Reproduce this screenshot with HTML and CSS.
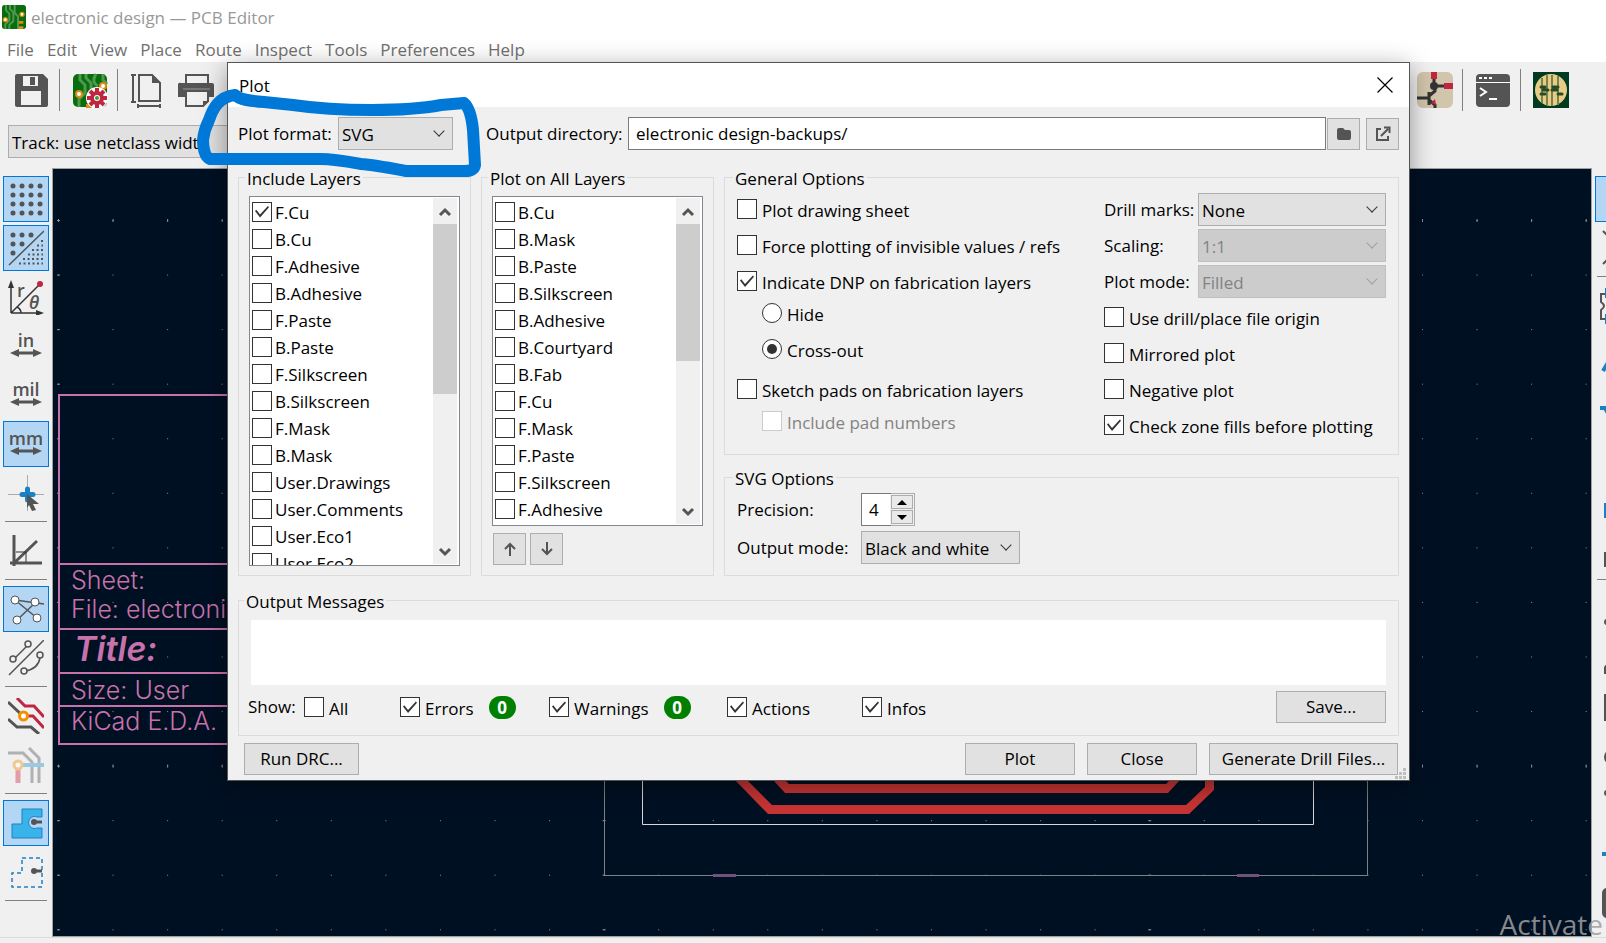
FILE: index.html
```html
<!DOCTYPE html>
<html lang="en">
  <head>
    <meta charset="utf-8">
    <title>electronic design — PCB Editor</title>
    <link rel="stylesheet" href="styles.css">
  </head>
  <body>
    <header class="titlebar">
      <svg class="app-icon" width="24" height="24" viewBox="0 0 36 36">
        <rect width="36" height="36" rx="4" fill="#0b6b0f"/>
        <path d="M6 0v8l5 5v10l-6 6v7M12 0v6l5 5v13l-6 6v6M19 0v12l5 5v19" fill="none" stroke="#4c9a4c" stroke-width="3"/>
        <circle cx="30" cy="14" r="3" fill="#fff" stroke="#e08a10" stroke-width="2"/>
        <circle cx="5" cy="22" r="3" fill="#fff" stroke="#e08a10" stroke-width="2"/>
        <path d="M25 24h7v4h-7zM25 32h7v4h-7z" fill="#e08a10"/>
      </svg>
      <span>electronic design — PCB Editor</span>
    </header>
    <nav class="menubar">
      <a href="#">File</a>
      <a href="#">Edit</a>
      <a href="#">View</a>
      <a href="#">Place</a>
      <a href="#">Route</a>
      <a href="#">Inspect</a>
      <a href="#">Tools</a>
      <a href="#">Preferences</a>
      <a href="#">Help</a>
    </nav>

    <div class="toolbar">
      <button class="tool" aria-label="Save">
        <svg width="36" height="36" viewBox="0 0 36 36">
          <path d="M3 2h26l5 5v26a2 2 0 0 1-2 2H3a2 2 0 0 1-2-2V4a2 2 0 0 1 2-2z" fill="#545454"/>
          <path d="M9 4h15v10H9zM7 19h20v14H7z" fill="#f0f0f0"/>
          <path d="M16 5h5v8h-5z" fill="#545454"/>
        </svg>
      </button>
      <span class="divider"></span>
      <button class="tool" aria-label="Board setup">
        <svg width="36" height="36" viewBox="0 0 36 36">
          <rect x="1" y="2" width="34" height="33" rx="5" fill="#0b6b0f"/>
          <path d="M8 2v6l5 5v8l-6 6v8M14 2v4l5 5v9M24 2c-4 6-2 10 2 12M31 2v6l4 4" fill="none" stroke="#4c9a4c" stroke-width="3"/>
          <circle cx="7" cy="22" r="3" fill="#fff" stroke="#e08a10" stroke-width="2"/>
          <circle cx="31" cy="14" r="3" fill="#fff" stroke="#e08a10" stroke-width="2"/>
          <path d="M14 34h8" stroke="#e08a10" stroke-width="4"/>
          <circle cx="25" cy="26" r="11" fill="#fff"/>
          <path d="M25 16v20M15 26h20M18 19l14 14M32 19L18 33" stroke="#bf2641" stroke-width="4"/>
          <circle cx="25" cy="26" r="5" fill="#fff" stroke="#bf2641" stroke-width="4"/>
          <circle cx="25" cy="26" r="2" fill="#3c9a3c"/>
        </svg>
      </button>
      <span class="divider"></span>
      <button class="tool" aria-label="Page settings">
        <svg width="36" height="36" viewBox="0 0 36 36">
          <path d="M9 3h13l8 8v18H9z" fill="none" stroke="#545454" stroke-width="2"/>
          <path d="M22 2v9h9z" fill="#545454"/>
          <path d="M3 2v28M1 3h5M1 30h5M8 34h22M8 32v4M30 32v4" fill="none" stroke="#545454" stroke-width="2"/>
        </svg>
      </button>
      <button class="tool print" aria-label="Print">
        <svg width="36" height="36" viewBox="0 0 36 36">
          <path d="M8 12V3h22v9" fill="#f0f0f0" stroke="#545454" stroke-width="2"/>
          <path d="M3 11h31a2 2 0 0 1 2 2v12h-6v-7H8v7H0V13a2 2 0 0 1 3-2z" fill="#545454"/>
          <path d="M5 17h27" stroke="#999"/>
          <path d="M8 19h22v10l-5 5H8z" fill="#f0f0f0" stroke="#545454" stroke-width="2"/>
          <path d="M25 35v-6h6z" fill="#545454"/>
        </svg>
      </button>
      <div class="toolbar-end">
        <button class="tool" aria-label="Schematic editor">
          <svg width="36" height="36" viewBox="0 0 36 36">
            <rect width="36" height="36" rx="6" fill="#d1c5ac"/>
            <path d="M0 26h12M12 20v13M12 24l6-5v-6M18 14h12M17 7v7M12 28l6 5v3" fill="none" stroke="#333" stroke-width="3"/>
            <circle cx="17" cy="14" r="4" fill="#333"/>
            <path d="M14 0h6v7h-6zM27 11h9v6h-9zM14 31l4-4 1 6z" fill="#bf2641"/>
          </svg>
        </button>
        <span class="divider"></span>
        <button class="tool" aria-label="Scripting console">
          <svg width="36" height="36" viewBox="0 0 36 36">
            <rect x="1" y="2" width="34" height="33" rx="4" fill="#545454"/>
            <path d="M1 10.500h34" stroke="#fff"/>
            <path d="M4 6h3M9 6h3M14 6h3" stroke="#fff" stroke-width="2"/>
            <path d="M5 16l6 4-6 4M14 27h8" fill="none" stroke="#fff" stroke-width="2"/>
          </svg>
        </button>
        <span class="divider"></span>
        <button class="tool" aria-label="Board plugin">
          <svg width="36" height="36" viewBox="0 0 36 36">
            <rect width="36" height="36" fill="#003a20"/>
            <circle cx="18" cy="18" r="16" fill="#e6cc86"/>
            <path d="M9 6v25M14 3v30M19 3v31M25 4v29" stroke="#77824c" stroke-width="2"/>
            <path d="M8 15h4M20 15h9M8 22h4M25 22h4M10 18h18" stroke="#274a28" stroke-width="3" stroke-linecap="round" stroke-dasharray="5 4"/>
          </svg>
        </button>
      </div>
    </div>
    <div class="toolbar-track">
      <select class="track-select" aria-label="Track width">
        <option>Track: use netclass width</option>
      </select>
    </div>

    <main class="workspace">
      <aside class="side-tools">
        <button class="side-button on" aria-label="Show grid">
          <svg width="36" height="36" viewBox="0 0 36 36">
            <path d="M5 5h28M5 14h28M5 23h28M5 32h28" fill="none" stroke="#545454" stroke-width="5" stroke-linecap="round" stroke-dasharray="0.010 9"/>
          </svg>
        </button>
        <button class="side-button on" aria-label="Grid overrides">
          <svg width="36" height="36" viewBox="0 0 36 36">
            <path d="M5 5h20M5 14h10M5 23h1" fill="none" stroke="#545454" stroke-width="5" stroke-linecap="round" stroke-dasharray="0.010 9"/>
            <path d="M1 35L36 1" stroke="#545454" stroke-width="1.500"/>
            <path d="M33 11h2M29 15.500h6M24 20h11M20 24.500h15M15 29h20M11 33.500h24" stroke="#545454" stroke-width="2" stroke-dasharray="2 2.500"/>
          </svg>
        </button>
        <button class="side-button" aria-label="Polar coordinates">
          <svg width="36" height="36" viewBox="0 0 36 36">
            <path d="M3 34V6M3 34h28M3 34L32 5M9 28q4 2 4 6" fill="none" stroke="#333" stroke-width="1.500"/>
            <path d="M3 1l3 8H0zM36 34l-8-3v6z" fill="#333"/>
            <circle cx="32" cy="5" r="3" fill="#bf2641"/>
            <text class="icon-text" x="9" y="18">r</text>
            <text class="icon-text slant" x="21" y="30">θ</text>
          </svg>
        </button>
        <button class="side-button" aria-label="Inches">
          <svg width="36" height="36" viewBox="0 0 36 36">
            <text class="icon-text" x="18" y="19" text-anchor="middle">in</text>
            <path d="M8 25h20" stroke="#545454" stroke-width="3"/>
            <path d="M2 25l9-4v8zM34 25l-9-4v8z" fill="#545454"/>
          </svg>
        </button>
        <button class="side-button" aria-label="Mils">
          <svg width="36" height="36" viewBox="0 0 36 36">
            <text class="icon-text" x="18" y="19" text-anchor="middle">mil</text>
            <path d="M8 25h20" stroke="#545454" stroke-width="3"/>
            <path d="M2 25l9-4v8zM34 25l-9-4v8z" fill="#545454"/>
          </svg>
        </button>
        <button class="side-button on" aria-label="Millimeters">
          <svg width="36" height="36" viewBox="0 0 36 36">
            <text class="icon-text" x="18" y="19" text-anchor="middle">mm</text>
            <path d="M8 25h20" stroke="#545454" stroke-width="3"/>
            <path d="M2 25l9-4v8zM34 25l-9-4v8z" fill="#545454"/>
          </svg>
        </button>
        <button class="side-button" aria-label="Full cursor">
          <svg width="36" height="36" viewBox="0 0 36 36">
            <path d="M0 19.500h36M19.500 0v36" stroke="#aaa"/>
            <path d="M14 19.500h11M19.500 14v11" stroke="#1a81c4" stroke-width="5" stroke-linecap="round"/>
            <path d="M19 19l12 10h-6l3 6-4 1-3-6-2 3z" fill="#545454"/>
          </svg>
        </button>
        <hr class="side-line">
        <button class="side-button" aria-label="Angle snap">
          <svg width="36" height="36" viewBox="0 0 36 36">
            <path d="M6 2v31M2 30h32M5 31L29 8" fill="none" stroke="#545454" stroke-width="3"/>
            <path d="M8 19h10v10" fill="none" stroke="#333"/>
          </svg>
        </button>
        <hr class="side-line">
        <button class="side-button on" aria-label="Ratsnest">
          <svg width="36" height="36" viewBox="0 0 36 36">
            <path d="M7 9l22 18M9 29L27 12M7 9l29 4" stroke="#545454" stroke-width="1.500"/>
            <g fill="#fff" stroke="#545454"><circle cx="7" cy="9" r="4"/><circle cx="27" cy="11" r="4"/><circle cx="9" cy="29" r="4"/><circle cx="29" cy="27" r="4"/></g>
          </svg>
        </button>
        <button class="side-button" aria-label="Curved ratsnest">
          <svg width="36" height="36" viewBox="0 0 36 36">
            <path d="M1 35L36 0M6 19L20 5M17 31q13-2 15-13" fill="none" stroke="#545454" stroke-width="1.500"/>
            <g fill="#f0f0f0" stroke="#545454" stroke-width="1.500"><circle cx="20" cy="4" r="3"/><circle cx="5" cy="19" r="3"/><circle cx="32" cy="15" r="3"/><circle cx="16" cy="31" r="3"/></g>
          </svg>
        </button>
        <hr class="side-line">
        <button class="side-button" aria-label="Net highlighting">
          <svg width="36" height="36" viewBox="0 0 36 36">
            <path d="M0 4l15 14M0 21l9 8h14l8 7" fill="none" stroke="#545454" stroke-width="3"/>
            <path d="M9 0l8 8h9l10 11M16 18h9l11 12" fill="none" stroke="#bf2641" stroke-width="3"/>
            <circle cx="15.500" cy="18" r="4" fill="#fff" stroke="#f29100" stroke-width="3"/>
          </svg>
        </button>
        <button class="side-button faded" aria-label="Layer dimming">
          <svg width="36" height="36" viewBox="0 0 36 36">
            <path d="M0 6h15l9 9v21M21 1l10 10v25" fill="none" stroke="#545454" stroke-width="3"/>
            <path d="M10 20v16" stroke="#d02040" stroke-width="5"/>
            <path d="M12 18h24" stroke="#1a90d0" stroke-width="4"/>
            <circle cx="10" cy="18" r="4" fill="#fff" stroke="#f29100" stroke-width="3"/>
          </svg>
        </button>
        <hr class="side-line">
        <button class="side-button on" aria-label="Filled zones">
          <svg width="36" height="36" viewBox="0 0 36 36">
            <path d="M4 19h10V4h20v8h-5a6 6 0 1 0 0 11h5v10H4z" fill="#39b4ea" stroke="#1a81c4"/>
            <path d="M26 17h8" stroke="#545454" stroke-width="3"/>
            <circle cx="26" cy="17" r="3" fill="#545454"/>
          </svg>
        </button>
        <button class="side-button" aria-label="Zone outlines">
          <svg width="36" height="36" viewBox="0 0 36 36">
            <path d="M14 4h20v29H4V19h10z" fill="none" stroke="#1a81c4" stroke-width="1.500" stroke-dasharray="4 3"/>
            <path d="M26 17h8" stroke="#545454" stroke-width="3"/>
            <circle cx="26" cy="17" r="3" fill="#545454"/>
          </svg>
        </button>
        <hr class="side-line">
      </aside>

      <section class="canvas">
        <svg class="board" width="100%" height="100%">
          <defs>
            <pattern id="grid" x="58" y="220" width="54.560" height="54.560" patternUnits="userSpaceOnUse">
              <rect width="1" height="1" fill="#8b8f94"/>
            </pattern>
            <pattern id="major-x" x="58" y="219" width="54.560" height="545.600" patternUnits="userSpaceOnUse">
              <rect width="1" height="3" fill="#8b8f94"/>
            </pattern>
            <pattern id="major-y" x="57" y="220" width="545.600" height="54.560" patternUnits="userSpaceOnUse">
              <rect width="3" height="1" fill="#8b8f94"/>
            </pattern>
          </defs>
          <g transform="translate(-53 -169)">
            <rect x="53" y="169" width="100%" height="100%" fill="url(#grid)"/>
            <rect x="53" y="169" width="100%" height="100%" fill="url(#major-x)"/>
            <rect x="53" y="169" width="100%" height="100%" fill="url(#major-y)"/>

            <!-- title block -->
            <path d="M240 395H59v349h181M59 564h181M59 629h181M59 673h181M59 706h181" fill="none" stroke="#c872ab" stroke-width="2"/>
            <g class="sheet-text">
              <text x="71" y="589">Sheet:</text>
              <text x="71" y="618">File: electronic</text>
              <text class="sheet-title" x="74" y="661">Title:</text>
              <text x="71" y="699">Size: User</text>
              <text x="71" y="730">KiCad E.D.A.</text>
            </g>

            <!-- board outline and tracks -->
            <path d="M604.500 400v475.500h763V400" fill="none" stroke="#7d8184"/>
            <path d="M642.500 400v424.500h671V400" fill="none" stroke="#d8d8d8"/>
            <path d="M713 875.500h23M1237 875.500h22" stroke="#72517a" stroke-width="3"/>
            <path d="M736 781h12l24 24h414l19-18v-6h9v9l-25 24H768z" fill="#c83434"/>
            <path d="M774 781h12l3 3h377l3-3h10l-11 12H785z" fill="#c83434"/>
          </g>
        </svg>
      </section>

      <aside class="side-tools right">
        <button class="side-button on" aria-label="Select"></button>
        <button class="side-button" aria-label="Local ratsnest">
          <svg width="36" height="36" viewBox="0 0 36 36"><path d="M3 1l4 4 4-4M3 34l4-4 4 4" fill="none" stroke="#545454" stroke-width="2"/></svg>
        </button>
        <hr class="side-line">
        <button class="side-button" aria-label="Add footprint">
          <svg width="36" height="36" viewBox="0 0 36 36"><path d="M6 6H1v8q6 4 0 8v9h5" fill="none" stroke="#545454" stroke-width="2"/><path d="M5 0h6v10H5zM5 26h6v10H5z" fill="#1a81c4"/></svg>
        </button>
        <button class="side-button" aria-label="Route tracks">
          <svg width="36" height="36" viewBox="0 0 36 36"><path d="M3 34L10 22" stroke="#1a81c4" stroke-width="4"/></svg>
        </button>
        <button class="side-button" aria-label="Tune length">
          <svg width="36" height="36" viewBox="0 0 36 36"><path d="M0 22h5l4 7" fill="none" stroke="#1a81c4" stroke-width="4"/></svg>
        </button>
        <button class="side-button" aria-label="Add via"></button>
        <button class="side-button" aria-label="Add zone">
          <svg width="36" height="36" viewBox="0 0 36 36"><path d="M4 19h30v15H4z" fill="#1a81c4"/></svg>
        </button>
        <button class="side-button" aria-label="Add keepout">
          <svg width="36" height="36" viewBox="0 0 36 36"><path d="M5 20h20v13H5z" fill="none" stroke="#545454" stroke-width="2"/></svg>
        </button>
        <hr class="side-line">
        <button class="side-button" aria-label="Draw line">
          <svg width="36" height="36" viewBox="0 0 36 36"><circle cx="7" cy="31" r="3" fill="#545454"/></svg>
        </button>
        <button class="side-button" aria-label="Draw arc">
          <svg width="36" height="36" viewBox="0 0 36 36"><path d="M4 34v-7l5-6v13z" fill="#545454"/></svg>
        </button>
        <button class="side-button" aria-label="Draw rectangle">
          <svg width="36" height="36" viewBox="0 0 36 36"><path d="M4 5h30v27H4z" fill="#545454"/></svg>
        </button>
        <button class="side-button" aria-label="Draw circle">
          <svg width="36" height="36" viewBox="0 0 36 36"><circle cx="12" cy="19" r="8" fill="#545454"/></svg>
        </button>
        <button class="side-button" aria-label="Draw polygon">
          <svg width="36" height="36" viewBox="0 0 36 36"><circle cx="7" cy="6" r="3" fill="#545454"/></svg>
        </button>
        <button class="side-button" aria-label="Add dimension">
          <svg width="36" height="36" viewBox="0 0 36 36"><path d="M2 18h34" stroke="#1a81c4" stroke-width="4"/></svg>
        </button>
        <button class="side-button" aria-label="Add image">
          <svg width="36" height="36" viewBox="0 0 36 36"><rect x="2" y="3" width="32" height="30" rx="5" fill="#545454"/></svg>
        </button>
      </aside>
    </main>
    <footer class="statusbar"></footer>
    <div class="watermark">Activate</div>

    <section class="dialog" role="dialog" aria-labelledby="plot-title">
      <div class="dialog-title">
        <span id="plot-title">Plot</span>
        <button class="close" aria-label="Close window">
          <svg width="16" height="16" viewBox="0 0 16 16"><path d="M0.500 0.500l15 15M15.500 0.500l-15 15" stroke="#000" stroke-width="1.200"/></svg>
        </button>
      </div>
      <form class="dialog-body">
        <div class="output-row">
          <label class="format-label" for="format">Plot format:</label>
          <span class="combo combo-format">
            <select id="format"><option>SVG</option></select>
          </span>
          <label class="dir-label" for="directory">Output directory:</label>
          <input class="directory" type="text" id="directory" value="electronic design-backups/">
          <button type="button" class="icon-button" aria-label="Browse">
            <svg width="16" height="16" viewBox="0 0 16 16"><path d="M3 2h4l2 2h4a2 2 0 0 1 2 2v6a2 2 0 0 1-2 2H3a2 2 0 0 1-2-2V4a2 2 0 0 1 2-2z" fill="#545454"/></svg>
          </button>
          <button type="button" class="icon-button open" aria-label="Open folder">
            <svg width="16" height="16" viewBox="0 0 16 16"><path d="M6 3H2v11h11v-4M6 10l7-7M9 1.500h5.500V7" fill="none" stroke="#545454" stroke-width="2"/></svg>
          </button>
        </div>

        <div class="columns">
          <fieldset class="layers">
            <legend>Include Layers</legend>
            <div class="list list-tall">
              <div class="list-items">
                <label class="check"><input type="checkbox" checked><span>F.Cu</span></label>
                <label class="check"><input type="checkbox"><span>B.Cu</span></label>
                <label class="check"><input type="checkbox"><span>F.Adhesive</span></label>
                <label class="check"><input type="checkbox"><span>B.Adhesive</span></label>
                <label class="check"><input type="checkbox"><span>F.Paste</span></label>
                <label class="check"><input type="checkbox"><span>B.Paste</span></label>
                <label class="check"><input type="checkbox"><span>F.Silkscreen</span></label>
                <label class="check"><input type="checkbox"><span>B.Silkscreen</span></label>
                <label class="check"><input type="checkbox"><span>F.Mask</span></label>
                <label class="check"><input type="checkbox"><span>B.Mask</span></label>
                <label class="check"><input type="checkbox"><span>User.Drawings</span></label>
                <label class="check"><input type="checkbox"><span>User.Comments</span></label>
                <label class="check"><input type="checkbox"><span>User.Eco1</span></label>
                <label class="check"><input type="checkbox"><span>User.Eco2</span></label>
              </div>
              <div class="scrollbar">
                <svg width="24" height="26" viewBox="0 0 24 26"><path d="M7 17l5-5 5 5" fill="none" stroke="#555" stroke-width="3"/></svg>
                <div class="thumb thumb-long"></div>
                <svg class="scroll-down" width="24" height="26" viewBox="0 0 24 26"><path d="M7 11l5 5 5-5" fill="none" stroke="#555" stroke-width="3"/></svg>
              </div>
            </div>
          </fieldset>

          <fieldset class="layers">
            <legend>Plot on All Layers</legend>
            <div class="list list-short">
              <div class="list-items">
                <label class="check"><input type="checkbox"><span>B.Cu</span></label>
                <label class="check"><input type="checkbox"><span>B.Mask</span></label>
                <label class="check"><input type="checkbox"><span>B.Paste</span></label>
                <label class="check"><input type="checkbox"><span>B.Silkscreen</span></label>
                <label class="check"><input type="checkbox"><span>B.Adhesive</span></label>
                <label class="check"><input type="checkbox"><span>B.Courtyard</span></label>
                <label class="check"><input type="checkbox"><span>B.Fab</span></label>
                <label class="check"><input type="checkbox"><span>F.Cu</span></label>
                <label class="check"><input type="checkbox"><span>F.Mask</span></label>
                <label class="check"><input type="checkbox"><span>F.Paste</span></label>
                <label class="check"><input type="checkbox"><span>F.Silkscreen</span></label>
                <label class="check"><input type="checkbox"><span>F.Adhesive</span></label>
              </div>
              <div class="scrollbar">
                <svg width="24" height="26" viewBox="0 0 24 26"><path d="M7 17l5-5 5 5" fill="none" stroke="#555" stroke-width="3"/></svg>
                <div class="thumb thumb-short"></div>
                <svg class="scroll-down" width="24" height="26" viewBox="0 0 24 26"><path d="M7 11l5 5 5-5" fill="none" stroke="#555" stroke-width="3"/></svg>
              </div>
            </div>
            <div class="order">
              <button type="button" class="icon-button" aria-label="Move up">
                <svg width="16" height="16" viewBox="0 0 16 16"><path d="M8 15V3M3 8l5-5 5 5" fill="none" stroke="#545454" stroke-width="2"/></svg>
              </button>
              <button type="button" class="icon-button" aria-label="Move down">
                <svg width="16" height="16" viewBox="0 0 16 16"><path d="M8 1v12M3 8l5 5 5-5" fill="none" stroke="#545454" stroke-width="2"/></svg>
              </button>
            </div>
          </fieldset>

          <div class="options">
            <fieldset class="general">
              <legend>General Options</legend>
              <div class="general-grid">
                <div class="general-left">
                  <label class="check"><input type="checkbox"><span>Plot drawing sheet</span></label>
                  <label class="check"><input type="checkbox"><span>Force plotting of invisible values / refs</span></label>
                  <label class="check"><input type="checkbox" checked><span>Indicate DNP on fabrication layers</span></label>
                  <div class="sub">
                    <label class="check"><input type="radio" name="dnp"><span>Hide</span></label>
                    <label class="check"><input type="radio" name="dnp" checked><span>Cross-out</span></label>
                  </div>
                  <label class="check"><input type="checkbox"><span>Sketch pads on fabrication layers</span></label>
                  <div class="sub">
                    <label class="check disabled"><input type="checkbox" disabled><span>Include pad numbers</span></label>
                  </div>
                </div>
                <div class="general-right">
                  <div class="pairs">
                    <label for="drill">Drill marks:</label>
                    <span class="combo"><select id="drill"><option>None</option></select></span>
                    <label for="scaling">Scaling:</label>
                    <span class="combo disabled"><select id="scaling" disabled><option>1:1</option></select></span>
                    <label for="mode">Plot mode:</label>
                    <span class="combo disabled"><select id="mode" disabled><option>Filled</option></select></span>
                  </div>
                  <label class="check"><input type="checkbox"><span>Use drill/place file origin</span></label>
                  <label class="check"><input type="checkbox"><span>Mirrored plot</span></label>
                  <label class="check"><input type="checkbox"><span>Negative plot</span></label>
                  <label class="check"><input type="checkbox" checked><span>Check zone fills before plotting</span></label>
                </div>
              </div>
            </fieldset>

            <fieldset class="svg-options">
              <legend>SVG Options</legend>
              <div class="svg-grid">
                <label for="precision">Precision:</label>
                <div class="spin">
                  <input type="text" id="precision" value="4">
                  <div class="spin-buttons">
                    <button type="button" aria-label="Increase"><svg width="10" height="5" viewBox="0 0 10 5"><path d="M5 0l5 5H0z"/></svg></button>
                    <button type="button" aria-label="Decrease"><svg width="10" height="5" viewBox="0 0 10 5"><path d="M0 0h10L5 5z"/></svg></button>
                  </div>
                </div>
                <label for="output-mode">Output mode:</label>
                <span class="combo combo-output"><select id="output-mode"><option>Black and white</option></select></span>
              </div>
            </fieldset>
          </div>
        </div>

        <fieldset class="messages">
          <legend>Output Messages</legend>
          <textarea aria-label="Output Messages"></textarea>
          <div class="filters">
            <span>Show:</span>
            <label class="check"><input type="checkbox"><span>All</span></label>
            <div class="filter">
              <label class="check"><input type="checkbox" checked><span>Errors</span></label>
              <span class="badge">0</span>
            </div>
            <div class="filter">
              <label class="check"><input type="checkbox" checked><span>Warnings</span></label>
              <span class="badge">0</span>
            </div>
            <label class="check"><input type="checkbox" checked><span>Actions</span></label>
            <label class="check"><input type="checkbox" checked><span>Infos</span></label>
            <button type="button" class="button">Save...</button>
          </div>
        </fieldset>

        <div class="actions">
          <button type="button" class="button button-drc">Run DRC...</button>
          <button type="button" class="button">Plot</button>
          <button type="button" class="button">Close</button>
          <button type="button" class="button button-drill">Generate Drill Files...</button>
        </div>
      </form>
      <svg class="grip" width="11" height="11" viewBox="0 0 11 11"><path d="M8 0h3v3H8zM4 4h3v3H4zM8 4h3v3H8zM0 8h3v3H0zM4 8h3v3H4zM8 8h3v3H8z" fill="#bfbfbf"/></svg>

      <!-- hand-drawn marker around the plot format -->
      <svg class="marker" width="290" height="100" viewBox="195 85 290 100">
        <path d="M235 95C240 100 250 101 264 102L293 105C320 109 345 110 372 110S425 108 441 105L464 103C470 108 472 120 473 130L475 165C474 170 470 171 465 171H406C390 168 375 165 361 164C345 161 335 159 320 159H210C204 157 203 145 203 140C204 130 206 126 209 120C213 108 219 97 235 95" fill="none" stroke="#0078d7" stroke-width="12" stroke-linejoin="round" stroke-linecap="round"/>
      </svg>
    </section>
  </body>
</html>
```
FILE: styles.css
```css
* {
  box-sizing: border-box;
}

body {
  margin: 0;
  height: 100vh;
  display: flex;
  flex-direction: column;
  position: relative;
  overflow: hidden;
  background-color: #f0f0f0;
  color: #000000;
  font-family: "Open Sans", "Noto Sans", sans-serif;
  font-size: 17px;
  line-height: 24px;
}

button,
input,
select,
textarea {
  font: inherit;
  color: inherit;
  margin: 0;
  border-radius: 0;
}

button {
  padding: 0;
}

svg {
  display: block;
}

.titlebar {
  display: flex;
  align-items: center;
  gap: 5px;
  height: 34px;
  padding-left: 2px;
  background-color: #ffffff;
  color: #999999;
}

.titlebar span {
  padding-top: 2px;
}

.menubar {
  display: flex;
  gap: 13px;
  height: 28px;
  padding: 4px 7px 0;
  background-color: #ffffff;
}

.menubar a {
  color: #707070;
  text-decoration: none;
}

/* top toolbars */

.toolbar {
  display: flex;
  align-items: center;
  height: 56px;
  padding: 0 37px 0 14px;
}

.tool {
  width: 36px;
  height: 36px;
  border: none;
  background: none;
}

.print {
  margin-left: 12px;
}

.divider {
  width: 1px;
  height: 42px;
  margin: 0 12px 0 9px;
  background-color: #808080;
}

.toolbar-end {
  display: flex;
  align-items: center;
  margin-left: auto;
}

.toolbar-track {
  height: 50px;
  padding: 7px 8px;
}

.track-select {
  appearance: none;
  width: 300px;
  height: 33px;
  padding: 2px 3px 0;
  border: 1px solid #adadad;
  background-color: #e1e1e1;
}

/* canvas with the two side toolbars */

.workspace {
  flex: 1;
  display: flex;
  min-height: 0;
}

.side-tools {
  display: flex;
  flex-direction: column;
  gap: 3px;
  width: 52px;
  padding: 8px 3px 0;
  overflow: hidden;
}

.side-tools.right {
  width: 14px;
  padding-right: 0;
}

.side-button {
  display: flex;
  flex: none;
  align-items: center;
  justify-content: center;
  width: 46px;
  height: 46px;
  border: 1px solid transparent;
  background: none;
}

.side-button.on {
  border-color: #0078d7;
  background-color: #b3d6f4;
}

.faded svg {
  opacity: 0.4;
}

.side-line {
  flex: none;
  width: 42px;
  height: 1px;
  margin: 2px 2px 3px;
  border: none;
  background-color: #808080;
}

.icon-text {
  font-family: "Open Sans", sans-serif;
  font-size: 18px;
  font-weight: 600;
  fill: #545454;
}

.slant {
  font-style: italic;
}

.canvas {
  flex: 1;
  min-width: 0;
  border: 1px solid #a0a0a0;
  background-color: #001023;
  overflow: hidden;
}

.sheet-text {
  font-family: Inter, sans-serif;
  font-size: 25px;
  font-weight: 300;
  fill: #c872ab;
}

.sheet-title {
  font-size: 34px;
  font-weight: 600;
  font-style: italic;
}

.statusbar {
  height: 6px;
  border-top: 1px solid #dcdcdc;
}

.watermark {
  position: absolute;
  right: 3px;
  bottom: 0;
  font-size: 28px;
  line-height: 38px;
  color: rgba(160, 160, 160, 0.85);
}

/* plot dialog */

.dialog {
  position: absolute;
  top: 62px;
  left: 227px;
  right: 196px;
  border: 1px solid #555555;
  background-color: #f0f0f0;
  box-shadow: 0 6px 24px rgba(0, 0, 0, 0.4);
}

.dialog-title {
  display: flex;
  align-items: center;
  justify-content: space-between;
  height: 44px;
  padding: 0 16px 0 11px;
  background-color: #ffffff;
}

.dialog-title span {
  padding-top: 2px;
}

.close {
  border: none;
  background: none;
}

.dialog-body {
  padding: 10px 10px 5px;
}

.output-row {
  display: flex;
  align-items: center;
  height: 33px;
}

.format-label {
  width: 100px;
}

.dir-label {
  width: 142px;
  margin-left: 33px;
}

.directory {
  flex: 1;
  min-width: 0;
  height: 33px;
  padding: 0 7px;
  border: 1px solid #7a7a7a;
  background-color: #ffffff;
}

.icon-button {
  display: flex;
  align-items: center;
  justify-content: center;
  width: 33px;
  height: 32px;
  margin-left: 1px;
  border: 1px solid #adadad;
  background-color: #e1e1e1;
}

.icon-button.open {
  margin-left: 6px;
}

.combo {
  display: block;
  position: relative;
  height: 33px;
}

.combo select {
  appearance: none;
  width: 100%;
  height: 100%;
  padding: 2px 3px 0;
  border: 1px solid #adadad;
  background-color: #e1e1e1;
}

.combo::after {
  content: "";
  position: absolute;
  top: 10px;
  right: 10px;
  width: 7px;
  height: 7px;
  border-right: 1px solid #333333;
  border-bottom: 1px solid #333333;
  transform: rotate(45deg);
}

.combo.disabled select {
  border-color: #bfbfbf;
  background-color: #cccccc;
  color: #838383;
  opacity: 1;
}

.combo.disabled::after {
  border-color: #a0a0a0;
}

.combo-format {
  width: 115px;
}

.combo-output {
  width: 159px;
}

.columns {
  display: flex;
  gap: 10px;
  margin-top: 15px;
}

fieldset {
  margin: 0;
  min-width: 0;
  border: 1px solid #dcdcdc;
}

legend {
  height: 24px;
  margin-left: -4px;
  padding: 2px 2px 0;
}

.layers {
  width: 233px;
  padding: 7px 10px 9px;
}

/* tick boxes and radios */

.check {
  display: flex;
  align-items: center;
  gap: 5px;
  height: 36px;
}

.check span {
  padding-top: 3px;
  white-space: nowrap;
}

.check input {
  appearance: none;
  flex: none;
  position: relative;
  width: 20px;
  height: 20px;
  border: 1px solid #333333;
  background-color: #ffffff;
}

.check input[type="radio"] {
  border-radius: 50%;
}

.check input[type="checkbox"]:checked::after {
  content: "";
  position: absolute;
  top: 3px;
  left: 2px;
  width: 14px;
  height: 12px;
  background-color: #333333;
  clip-path: polygon(0 46%, 9% 36%, 36% 76%, 92% 4%, 100% 14%, 36% 100%);
}

.check input[type="radio"]:checked::after {
  content: "";
  position: absolute;
  top: 4px;
  left: 4px;
  width: 10px;
  height: 10px;
  border-radius: 50%;
  background-color: #333333;
}

.check.disabled {
  color: #838383;
}

.check.disabled input {
  border-color: #cccccc;
}

.list {
  display: flex;
  padding: 1px 2px;
  border: 1px solid #828790;
  background-color: #ffffff;
  overflow: hidden;
}

.list-tall {
  height: 370px;
}

.list-short {
  height: 330px;
}

.list-items {
  flex: 1;
}

.list .check {
  gap: 3px;
  height: 27px;
}

.scrollbar {
  display: flex;
  flex-direction: column;
  width: 24px;
  background-color: #f0f0f0;
}

.thumb {
  background-color: #cdcdcd;
}

.thumb-long {
  height: 170px;
}

.thumb-short {
  height: 137px;
}

.scroll-down {
  margin-top: auto;
}

.order {
  display: flex;
  gap: 3px;
  margin-top: 7px;
}

.options {
  flex: 1;
  display: flex;
  flex-direction: column;
  gap: 10px;
  min-width: 0;
}

.general {
  padding: 2px 12px 11px;
}

.general-grid {
  display: grid;
  grid-template-columns: 1fr 282px;
}

.sub {
  margin: -4px 0 4px 25px;
}

.pairs {
  display: grid;
  grid-template-columns: 94px 1fr;
  align-items: center;
  gap: 3px 0;
  padding: 2px 0 1px;
}

.svg-options {
  padding: 4px 12px 11px;
}

.svg-grid {
  display: grid;
  grid-template-columns: 124px 1fr;
  align-items: center;
  gap: 5px 0;
}

.spin {
  display: flex;
  width: 54px;
  height: 33px;
  border: 1px solid #adadad;
}

.spin input {
  width: 28px;
  padding: 0 7px;
  border: none;
  outline: 1px solid #7a7a7a;
  background-color: #ffffff;
}

.spin-buttons {
  flex: 1;
  display: flex;
  flex-direction: column;
  gap: 1px;
  padding: 1px;
  background-color: #f0f0f0;
}

.spin-buttons button {
  flex: 1;
  display: flex;
  align-items: center;
  justify-content: center;
  border: 1px solid #adadad;
  background-color: #e9e9e9;
}

.messages {
  margin-top: 12px;
  padding: 8px 12px 12px 9px;
}

.messages textarea {
  display: block;
  width: calc(100% - 3px);
  height: 65px;
  margin-left: 3px;
  padding: 0;
  border: none;
  background-color: #ffffff;
  resize: none;
}

.filters {
  display: grid;
  grid-template-columns: 56px 96px 149px 178px 135px 1fr 110px;
  align-items: center;
  height: 32px;
  margin-top: 6px;
}

.filters .check {
  height: 32px;
}

.filter {
  display: flex;
  align-items: center;
  gap: 15px;
}

.badge {
  width: 27px;
  height: 23px;
  border-radius: 12px;
  background-color: #008000;
  color: #ffffff;
  font-weight: 700;
  line-height: 23px;
  text-align: center;
}

.button {
  width: 110px;
  height: 32px;
  border: 1px solid #adadad;
  background-color: #e1e1e1;
}

.actions {
  display: flex;
  gap: 12px;
  margin-top: 7px;
  padding: 0 1px 0 6px;
}

.button-drc {
  width: 115px;
  margin-right: auto;
}

.button-drill {
  width: 189px;
}

.grip {
  position: absolute;
  right: 3px;
  bottom: 1px;
}

.marker {
  position: absolute;
  top: 22px;
  left: -33px;
  pointer-events: none;
}
```
